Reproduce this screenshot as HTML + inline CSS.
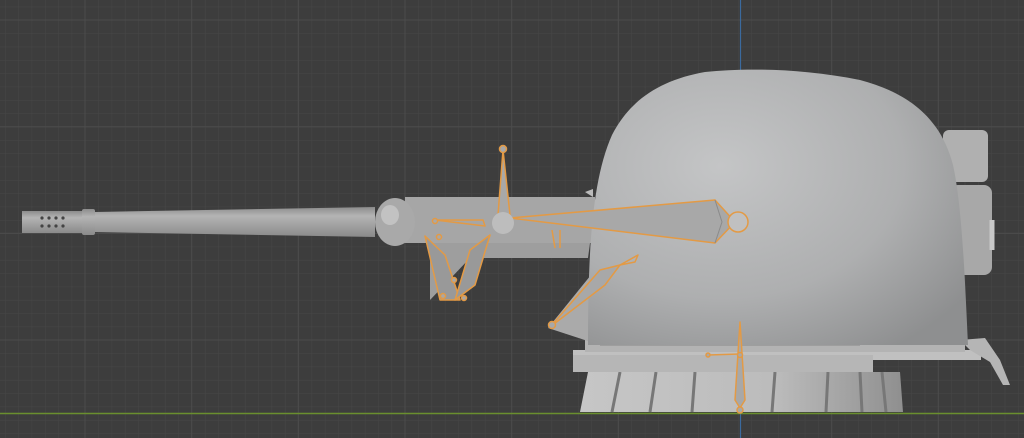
<!DOCTYPE html>
<html><head><style>html,body{margin:0;padding:0;background:#3d3d3d;overflow:hidden}svg{display:block}</style></head>
<body>
<svg width="1024" height="438" viewBox="0 0 1024 438" xmlns="http://www.w3.org/2000/svg">
<defs>
<pattern id="g" width="13.33" height="13.33" patternUnits="userSpaceOnUse" x="5" y="6.7">
<path d="M0 0H13.33M0 0V13.33" stroke="#474747" stroke-width="1" fill="none"/>
</pattern>
<radialGradient id="dome" cx="0.35" cy="0.35" r="0.8">
<stop offset="0" stop-color="#c4c5c6"/><stop offset="0.6" stop-color="#aeafb0"/><stop offset="1" stop-color="#8e8f90"/>
</radialGradient>
<linearGradient id="bar" x1="0" y1="0" x2="0" y2="1">
<stop offset="0" stop-color="#8c8c8c"/><stop offset="0.3" stop-color="#b4b4b4"/><stop offset="1" stop-color="#8a8a8a"/>
</linearGradient>
<linearGradient id="skirt" x1="0" y1="0" x2="1" y2="0">
<stop offset="0" stop-color="#c6c6c6"/><stop offset="0.6" stop-color="#bcbcbc"/><stop offset="1" stop-color="#8f8f8f"/>
</linearGradient>
</defs>
<rect width="1024" height="438" fill="#3d3d3d"/>
<rect width="1024" height="438" fill="url(#g)"/>
<path d="M85 0V438M0 20H1024M0 126.7H1024M0 233.3H1024M0 340H1024M191.7 0V438M298.3 0V438M405 0V438M511.7 0V438M618.3 0V438M831.7 0V438M938.3 0V438" stroke="#4c4c4c" stroke-width="1"/>
<line x1="740.5" y1="0" x2="740.5" y2="438" stroke="#3b6a9e" stroke-width="1.2"/>
<line x1="0" y1="413.5" x2="1024" y2="413.5" stroke="#6a8f2e" stroke-width="1.5"/>

<!-- base skirt -->
<path d="M588 372H900L903 412H580Z" fill="url(#skirt)"/>
<path d="M620 372L612 412M656 372L650 412M695 372L692 412M775 372L772 412M828 372L826 412M860 372L862 412M882 372L886 412" stroke="#777" stroke-width="3"/>
<!-- ring platform -->
<rect x="573" y="350" width="408" height="10" fill="#c0c0c0"/>
<rect x="573" y="355" width="300" height="17" fill="#b6b6b6"/>
<rect x="585" y="338" width="380" height="14" fill="#b3b3b3"/>
<path d="M960 340L985 338L1000 360L1010 385L1003 385L990 362L970 350Z" fill="#b5b5b5"/>
<path d="M600 345h260" stroke="#888" stroke-width="1"/>

<!-- rear boxes -->
<rect x="943" y="130" width="45" height="52" rx="6" fill="#b0b0b0"/>
<rect x="950" y="185" width="42" height="90" rx="8" fill="#a8a8a8"/>
<path d="M992 220v30" stroke="#c8c8c8" stroke-width="5"/>

<!-- sleeve and lower arm -->
<rect x="405" y="197" width="190" height="46" fill="#a6a6a6"/>
<path d="M430 243H590L588 258H470L430 300Z" fill="#9e9e9e"/>
<path d="M548 328L595 270L600 345Z" fill="#aaa"/>

<!-- dome -->
<path d="M588 345C588 250 592 180 612 135C630 100 660 80 705 72C745 68 800 68 860 80C905 92 940 115 953 165C962 205 965 280 968 345Z" fill="url(#dome)"/>
<path d="M585 192l8-3v8z" fill="#bbb"/>

<!-- barrel -->
<path d="M95 212L375 207L375 237L95 232Z" fill="url(#bar)"/>
<rect x="22" y="211" width="60" height="22" fill="url(#bar)"/>
<rect x="82" y="209" width="13" height="26" rx="2" fill="url(#bar)"/>
<g fill="#444">
<circle cx="42" cy="218" r="1.6"/><circle cx="42" cy="226" r="1.6"/>
<circle cx="49" cy="218" r="1.6"/><circle cx="49" cy="226" r="1.6"/>
<circle cx="56" cy="218" r="1.6"/><circle cx="56" cy="226" r="1.6"/>
<circle cx="63" cy="218" r="1.6"/><circle cx="63" cy="226" r="1.6"/>
</g>
<ellipse cx="395" cy="222" rx="20" ry="24" fill="#a9a9a9"/>
<ellipse cx="390" cy="215" rx="9" ry="10" fill="#c2c2c2"/>

<!-- bones -->
<g stroke="#e39a45" stroke-width="1.5" fill="#a8a8a8" stroke-linejoin="round">
<path d="M503 150L498 215L510 215Z"/>
<circle cx="503" cy="149" r="3.5"/>
<path d="M510 218L715 200L735 222L715 243Z"/>
<path d="M715 200L722 222L715 243" fill="none" stroke="#8a8a8a" stroke-width="1"/>
<circle cx="738" cy="222" r="10" fill="#c0c0c0"/>
<circle cx="503" cy="223" r="11" fill="#bdbdbd" stroke="none"/>
<path d="M435 220L483 220L485 226Z" fill="none"/>
<circle cx="435" cy="221" r="2.5"/>
<path d="M550 327L600 270L620 265L605 285Z"/>
<path d="M620 265L638 255L635 262Z" fill="none"/>
<circle cx="552" cy="325" r="3.5"/>
<path d="M425 236L445 255L460 300L440 300Z" fill="#999"/>
<path d="M470 250L490 235L475 285L455 300Z" fill="#999"/>
<circle cx="439" cy="237" r="2.5"/><circle cx="454" cy="280" r="2.5"/><circle cx="464" cy="298" r="2.5"/><circle cx="443" cy="296" r="2.5"/>
<path d="M552 230L555 248M560 230L560 248" fill="none"/>
<path d="M740 322L735 400L740 408L745 400Z"/>
<path d="M708 355L740 354" fill="none"/>
<circle cx="740" cy="355" r="2.5"/><circle cx="708" cy="355" r="2"/><circle cx="740" cy="410" r="3"/>
</g>
</svg>
</body></html>
